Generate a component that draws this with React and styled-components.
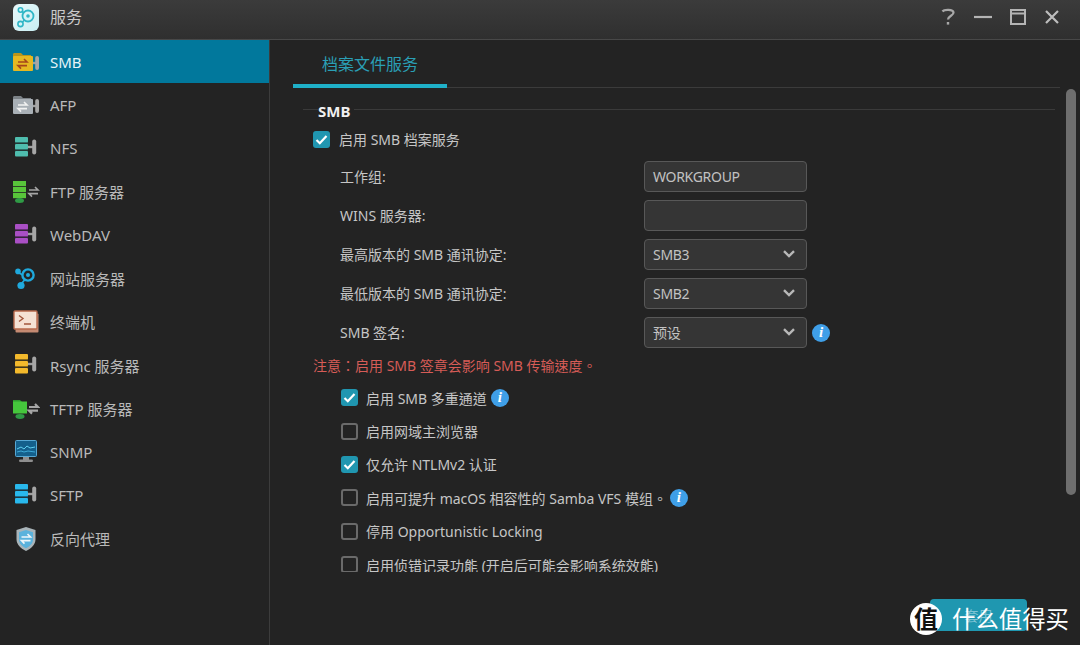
import React from "react";
import styled, { createGlobalStyle } from "styled-components";

const GlobalStyle = createGlobalStyle`
  html, body {
    margin: 0;
    padding: 0;
    background: #232323;
    overflow: hidden;
  }
  * {
    box-sizing: border-box;
  }
`;

const Bars = ({ color, dark }) => (
  <>
    <rect x="3" y="1" width="13" height="5.6" rx="1" fill={color} />
    <rect x="3" y="8" width="13" height="5.6" rx="1" fill={color} />
    <rect x="3" y="15" width="13" height="5.6" rx="1" fill={color} />
    <path d="M3 6.8h13M3 13.8h13" stroke={dark} strokeWidth="1" />
    <path d="M16 11h5" stroke="#a0a0a0" strokeWidth="2.4" />
    <rect x="20.2" y="3.5" width="4" height="15" rx="2" fill="#a6a6a6" />
  </>
);

const Swap = ({ x, y, color, width = 1.6 }) => (
  <path
    d={`M${x} ${y}h9l-3-3M${x + 9} ${y + 3.6}h-9l3 3`}
    stroke={color}
    strokeWidth={width}
    fill="none"
  />
);

const Folder = ({ fill, tab, arrows }) => (
  <>
    <path d="M1 7V4.5C1 3.7 1.6 3 2.4 3H9l2 2h8v2z" fill={tab} />
    <rect x="1" y="6" width="20" height="15" rx="1" fill={fill} />
    <Swap x={6} y={12} color={arrows} />
    <path d="M21 13h3" stroke="#a0a0a0" strokeWidth="2.4" />
    <rect x="23.2" y="6" width="3.8" height="14" rx="1.9" fill="#a6a6a6" />
  </>
);

const icons = {
  smb: <Folder fill="#e5b821" tab="#b8951c" arrows="#a5461c" />,
  afp: <Folder fill="#a9b0b6" tab="#7c8287" arrows="#f2f2f2" />,
  nfs: <Bars color="#4fbdae" dark="#2b6d66" />,
  webdav: <Bars color="#a94fc4" dark="#672d78" />,
  rsync: <Bars color="#f3b92c" dark="#8c6a16" />,
  sftp: <Bars color="#29b8ec" dark="#16688a" />,
  ftp: (
    <>
      <rect x="1" y="1" width="13" height="5.2" fill="#58c43a" />
      <rect x="1" y="7" width="13" height="5.2" fill="#58c43a" />
      <rect x="1" y="13" width="13" height="5.2" fill="#58c43a" />
      <ellipse cx="7.5" cy="20.5" rx="4.5" ry="2.5" fill="#2f9a45" />
      <Swap x={17} y={10} color="#a6a6a6" />
    </>
  ),
  web: (
    <>
      <circle cx="16" cy="9" r="5.6" fill="none" stroke="#1fa9dd" strokeWidth="2.4" />
      <circle cx="16" cy="9" r="2" fill="#1fa9dd" />
      <circle cx="6" cy="5.4" r="2.8" fill="#1fa9dd" />
      <circle cx="9" cy="19.5" r="3.6" fill="#1fa9dd" />
      <path d="M7 7l4 2M10 17l3-3.5" stroke="#1fa9dd" strokeWidth="1.8" />
    </>
  ),
  terminal: (
    <>
      <rect x="3.5" y="3.5" width="23" height="19" rx="1" fill="#c48a72" />
      <rect x="2" y="1" width="23" height="18" rx="1" fill="#f5e1d3" stroke="#b8694c" strokeWidth="1.4" />
      <path d="M7 5.5l4 3-4 3M12 14h7" stroke="#a3573c" strokeWidth="1.4" fill="none" />
    </>
  ),
  tftp: (
    <>
      <path d="M1 5V3h7l2 2H15V6z" fill="#2f9a2f" />
      <rect x="1" y="4.5" width="14" height="12" fill="#45c63c" />
      <ellipse cx="8" cy="19.5" rx="4.5" ry="2.4" fill="#2f9a45" />
      <Swap x={17} y={10} color="#a6a6a6" width={2.2} />
    </>
  ),
  snmp: (
    <>
      <rect x="3.5" y="0.5" width="21" height="16" rx="1" fill="#14608c" stroke="#57a8d4" strokeWidth="1" />
      <path d="M5 9l4-2 3 2 3-3 3 2 5-1" stroke="#5fd0f0" strokeWidth="1" fill="none" />
      <path d="M5 12l4-1 3 1 4-1 7 1" stroke="#3eaad8" strokeWidth="1" fill="none" />
      <rect x="11" y="17" width="6" height="3" fill="#8f8f8f" />
      <rect x="7" y="19.5" width="14" height="2.6" rx="1.3" fill="#8f8f8f" />
    </>
  ),
  shield: (
    <>
      <path d="M14 0l9.5 3v9c0 6-4.5 9.5-9.5 12-5-2.500-9.500-6-9.500-12V3z" fill="#a9b4b9" />
      <path d="M14 3l7 2.200v7c0 4.600-3.400 7.200-7 9.100-3.600-1.900-7-4.500-7-9.100v-7z" fill="#5ab2dc" />
      <Swap x={9.5} y={10} color="#eef6fa" />
    </>
  ),
};

const services = [
  { id: "smb", label: "SMB" },
  { id: "afp", label: "AFP" },
  { id: "nfs", label: "NFS" },
  { id: "ftp", label: "FTP 服务器" },
  { id: "webdav", label: "WebDAV" },
  { id: "web", label: "网站服务器" },
  { id: "terminal", label: "终端机" },
  { id: "rsync", label: "Rsync 服务器" },
  { id: "tftp", label: "TFTP 服务器" },
  { id: "snmp", label: "SNMP" },
  { id: "sftp", label: "SFTP" },
  { id: "shield", label: "反向代理" },
];

const formRows = [
  { label: "工作组:", value: "WORKGROUP" },
  { label: "WINS 服务器:", value: "" },
  { label: "最高版本的 SMB 通讯协定:", value: "SMB3", select: true },
  { label: "最低版本的 SMB 通讯协定:", value: "SMB2", select: true },
  { label: "SMB 签名:", value: "预设", select: true, info: true },
];

const options = [
  { label: "启用 SMB 多重通道", checked: true, info: true },
  { label: "启用网域主浏览器" },
  { label: "仅允许 NTLMv2 认证", checked: true },
  { label: "启用可提升 macOS 相容性的 Samba VFS 模组。", info: true, tight: true },
  { label: "停用 Opportunistic Locking" },
  { label: "启用侦错记录功能 (开启后可能会影响系统效能)" },
];

const CheckBox = ({ checked }) => (
  <Box $checked={checked}>
    {checked && (
      <svg width="13" height="13" viewBox="0 0 13 13">
        <path d="M1.500 7l3.300 3.200L11.500 3" stroke="#fff" strokeWidth="2.200" fill="none" />
      </svg>
    )}
  </Box>
);

const App = () => {
  return (
    <Page>
      <GlobalStyle />
      <TitleBar>
        <AppIcon>
          <svg width="20" height="22" viewBox="0 0 20 22">
            <circle cx="12" cy="10" r="5.500" fill="none" stroke="#2fb6c6" strokeWidth="1.800" />
            <circle cx="12" cy="10" r="1.800" fill="#2fb6c6" />
            <circle cx="4.500" cy="4" r="2.200" fill="none" stroke="#2fb6c6" strokeWidth="1.600" />
            <circle cx="4.500" cy="18" r="2.600" fill="none" stroke="#2fb6c6" strokeWidth="1.600" />
            <path d="M6 5.500l2 1.500M6.500 16l2-2" stroke="#2fb6c6" strokeWidth="1.600" />
          </svg>
        </AppIcon>
        <AppTitle>服务</AppTitle>
        <WindowControls>
          <svg width="16" height="18" viewBox="0 0 16 18">
            <path d="M2.500 3.500C4 1.500 13 1 13.500 4.500c.4 3-5.500 3.500-5.500 7" stroke="#a8a8a8" strokeWidth="2.300" fill="none" />
            <rect x="6.800" y="14" width="2.400" height="2.600" fill="#a8a8a8" />
          </svg>
          <svg width="18" height="18" viewBox="0 0 18 18">
            <path d="M0 9h18" stroke="#b4b4b4" strokeWidth="2.200" />
          </svg>
          <svg width="16" height="16" viewBox="0 0 16 16">
            <path d="M1 1h14v14H1zM1 4.500h14" stroke="#b4b4b4" strokeWidth="2" fill="none" />
          </svg>
          <svg width="16" height="16" viewBox="0 0 16 16">
            <path d="M2 2l12 12M14 2L2 14" stroke="#bdbdbd" strokeWidth="2.200" />
          </svg>
        </WindowControls>
      </TitleBar>
      <Body>
        <Sidebar>
          {services.map((item, index) => (
            <NavItem key={item.id} $active={index === 0}>
              <NavIcon width="28" height="24" viewBox="0 0 28 24">
                {icons[item.id]}
              </NavIcon>
              {item.label}
            </NavItem>
          ))}
        </Sidebar>
        <Main>
          <TabBar>
            <Tab>档案文件服务</Tab>
          </TabBar>
          <ScrollArea>
            <Content>
              <SectionHead>
                <SectionLine $short />
                <SectionTitle>SMB</SectionTitle>
                <SectionLine />
              </SectionHead>
              <EnableRow>
                <CheckBox checked />
                启用 SMB 档案服务
              </EnableRow>
              {formRows.map((row) => (
                <FormRow key={row.label}>
                  <FormLabel>{row.label}</FormLabel>
                  <Field>
                    {row.value}
                    {row.select && (
                      <Chevron width="12" height="8" viewBox="0 0 12 8">
                        <path d="M1 1.200l5 4.800 5-4.800" stroke="#b8b8b8" strokeWidth="2.400" fill="none" />
                      </Chevron>
                    )}
                  </Field>
                  {row.info && <Info>i</Info>}
                </FormRow>
              ))}
              <Note>注意：启用 SMB 签章会影响 SMB 传输速度。</Note>
              {options.map((opt) => (
                <OptionRow key={opt.label}>
                  <CheckBox checked={opt.checked} />
                  {opt.label}
                  {opt.info && <OptionInfo $tight={opt.tight}>i</OptionInfo>}
                </OptionRow>
              ))}
            </Content>
            <ScrollTrack>
              <ScrollThumb />
            </ScrollTrack>
          </ScrollArea>
          <Footer>
            <ApplyButton>套用</ApplyButton>
          </Footer>
        </Main>
      </Body>
      <Watermark>
        <WatermarkBadge>值</WatermarkBadge>
        什么值得买
      </Watermark>
    </Page>
  );
};

const Page = styled.div`
  position: relative;
  display: flex;
  flex-direction: column;
  width: 1080px;
  height: 645px;
  overflow: hidden;
  background: #232323;
  color: #c6c6c6;
  font-family: "Noto Sans", "Noto Sans CJK SC", sans-serif;
  font-size: 14px;
`;

const TitleBar = styled.div`
  display: flex;
  align-items: center;
  flex: 0 0 40px;
  padding: 0 19px 5px 13px;
  background: linear-gradient(#3b3b3b, #2f2f2f);
  border-bottom: 1px solid #484848;
`;

const AppIcon = styled.div`
  display: flex;
  align-items: center;
  justify-content: center;
  width: 26px;
  height: 27px;
  background: linear-gradient(135deg, #e8f8fa, #c8eef3);
  border-radius: 6px;
`;

const AppTitle = styled.div`
  margin: 0 0 2px 11px;
  font-size: 16px;
  color: #c9c9c9;
`;

const WindowControls = styled.div`
  display: flex;
  align-items: center;
  gap: 18px;
  margin-left: auto;
  margin-right: 1px;
`;

const Body = styled.div`
  display: flex;
  flex: 1;
  min-height: 0;
`;

const Sidebar = styled.div`
  flex: 0 0 270px;
  background: #232323;
  border-right: 1px solid #3c3c3c;
`;

const NavItem = styled.div`
  display: flex;
  align-items: center;
  height: 43.36px;
  padding-left: 12px;
  background: ${(props) => (props.$active ? "#01789c" : "transparent")};
  color: ${(props) => (props.$active ? "#e6f4f8" : "#b9b9b9")};
  font-size: 15px;
`;

const NavIcon = styled.svg`
  flex: none;
  margin-right: 10px;
`;

const Main = styled.div`
  display: flex;
  flex: 1;
  flex-direction: column;
  min-width: 0;
`;

const TabBar = styled.div`
  display: flex;
  flex: 0 0 48px;
  margin: 0 20px 0 23px;
  border-bottom: 1px solid #3b3b3b;
`;

const Tab = styled.div`
  display: flex;
  align-items: center;
  justify-content: center;
  width: 154px;
  height: 48px;
  margin-bottom: -1px;
  padding-top: 2px;
  border-bottom: 4px solid #1fb0c8;
  font-size: 16px;
  color: #2a9fb5;
`;

const ScrollArea = styled.div`
  display: flex;
  flex: 0 0 484px;
  overflow: hidden;
`;

const Content = styled.div`
  flex: 1;
  min-width: 0;
  padding: 13px 0 0 33px;
  overflow: hidden;
`;

const SectionHead = styled.div`
  display: flex;
  align-items: center;
  height: 20px;
  margin-right: 1px;
`;

const SectionLine = styled.div`
  flex: ${(props) => (props.$short ? "0 0 15px" : "1")};
  height: 1px;
  margin-bottom: 4px;
  background: #3a3a3a;
`;

const SectionTitle = styled.div`
  padding-right: 4px;
  font-size: 15px;
  font-weight: 700;
  color: #f0f0f0;
`;

const EnableRow = styled.div`
  display: flex;
  align-items: center;
  gap: 9px;
  height: 36px;
  padding-left: 10px;
`;

const Box = styled.span`
  display: inline-flex;
  align-items: center;
  justify-content: center;
  flex: none;
  width: 17px;
  height: 17px;
  background: ${(props) => (props.$checked ? "#2096b0" : "transparent")};
  border: ${(props) => (props.$checked ? "none" : "2px solid #6a6a6a")};
  border-radius: 3px;
`;

const FormRow = styled.div`
  display: flex;
  align-items: center;
  height: 39px;
  padding-left: 37px;
`;

const FormLabel = styled.div`
  flex: 0 0 304px;
  padding-bottom: 2px;
`;

const Field = styled.div`
  position: relative;
  display: flex;
  align-items: center;
  width: 163px;
  height: 31px;
  padding: 0 0 1px 8px;
  background: #353535;
  border: 1px solid #585858;
  border-radius: 4px;
  color: #c2c2c2;
  letter-spacing: -0.3px;
`;

const Chevron = styled.svg`
  position: absolute;
  right: 11px;
  top: 10px;
`;

const Info = styled.span`
  display: inline-flex;
  align-items: center;
  justify-content: center;
  flex: none;
  width: 18px;
  height: 18px;
  margin-left: 5px;
  background: #3f9fe8;
  border-radius: 50%;
  color: #fff;
  font-family: "Liberation Serif", serif;
  font-style: italic;
  font-weight: 700;
  font-size: 15px;
`;

const OptionInfo = styled(Info)`
  margin-left: ${(props) => (props.$tight ? "-5px" : "-4px")};
`;

const Note = styled.div`
  display: flex;
  align-items: center;
  height: 25px;
  margin-bottom: 4px;
  padding-left: 10px;
  color: #d65c57;
  font-family: "Noto Sans", "Noto Sans CJK TC", sans-serif;
`;

const OptionRow = styled.div`
  display: flex;
  align-items: center;
  gap: 8px;
  height: 33.4px;
  padding-left: 38px;
  white-space: nowrap;
  font-family: "Noto Sans", "Noto Sans CJK TC", sans-serif;
`;

const ScrollTrack = styled.div`
  flex: 0 0 24px;
  padding: 1px 4px 0 0;
  display: flex;
  justify-content: flex-end;
`;

const ScrollThumb = styled.div`
  width: 10px;
  height: 406px;
  background: #6e6e6e;
  border-radius: 5px;
`;

const Footer = styled.div`
  display: flex;
  justify-content: flex-end;
  padding: 27px 53px 0 0;
`;

const ApplyButton = styled.div`
  display: flex;
  align-items: center;
  justify-content: center;
  width: 97px;
  height: 32px;
  background: #1f97b0;
  border-radius: 4px;
  color: #7fc4d4;
`;

const Watermark = styled.div`
  position: absolute;
  left: 910px;
  top: 603px;
  display: flex;
  align-items: center;
  gap: 10px;
  font-size: 23.4px;
  line-height: 32px;
  color: #fff;
  white-space: nowrap;
`;

const WatermarkBadge = styled.span`
  display: flex;
  align-items: center;
  justify-content: center;
  width: 32px;
  height: 32px;
  background: #fff;
  border-radius: 50%;
  color: #111;
  font-size: 24px;
  font-weight: 700;
`;

export default App;
